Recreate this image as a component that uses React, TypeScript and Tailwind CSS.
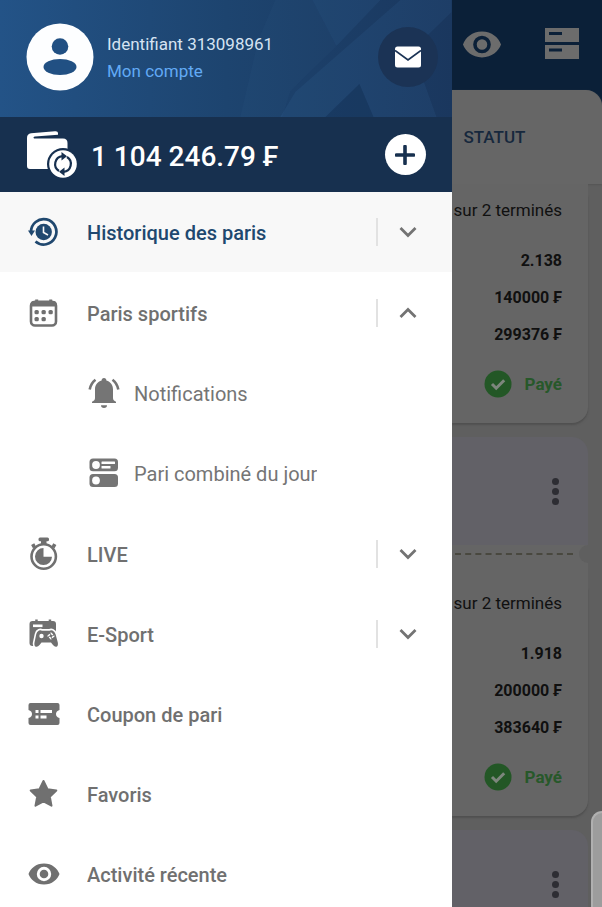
import type { ReactNode } from "react";

type IconProps = { className?: string };

function AvatarIcon() {
  return (
    <svg viewBox="0 0 68 68" className="size-[68px] shrink-0" aria-hidden="true">
      <circle cx="34" cy="34" r="33.5" fill="#fdfeff" />
      <circle cx="34" cy="23.5" r="8.3" fill="#215083" />
      <ellipse cx="34" cy="44" rx="16.5" ry="8" fill="#215083" />
    </svg>
  );
}

function WalletIcon() {
  return (
    <svg viewBox="0 0 52 50" className="h-[50px] w-[52px] shrink-0" aria-hidden="true">
      <path
        d="M1 8c0-3 1.500-4.500 4-4.800L29 1.200c2-.2 3 .6 3 2.300v1.300L9 6.500c-1.500.1-2 1.500-.8 1.900H37c3 0 4.500 1.500 4.500 4.500V36c0 2-1.500 3-3.500 3H4c-2 0-3-1.200-3-3z"
        fill="#fff"
      />
      <circle cx="37" cy="34" r="16" fill="#17304f" />
      <circle cx="37" cy="34" r="13.800" fill="#fff" />
      <g fill="none" stroke="#17304f" strokeWidth="2.200">
        <path d="M33 41A8 8 0 0 1 36.500 26.200" />
        <path d="M41 27A8 8 0 0 1 37.500 41.800" />
      </g>
      <path d="M35.500 22l5.500 4.200-5.500 4.200zM38.500 37.600l-5.500 4.200 5.500 4.200z" fill="#17304f" />
    </svg>
  );
}

function MailIcon() {
  return (
    <svg viewBox="0 0 26 22" className="h-[22px] w-[26px]" aria-hidden="true">
      <rect x="0" y="0.500" width="26" height="21" rx="2.500" fill="#fff" />
      <path d="M0 4.500l13 9.500 13-9.500" fill="none" stroke="#1b3355" strokeWidth="1.800" />
    </svg>
  );
}

function HistoryIcon({ className }: IconProps) {
  return (
    <svg viewBox="0 0 32 32" className={className} aria-hidden="true">
      <path d="M3 16A12.700 12.700 0 1 1 7.500 25.500" fill="none" stroke="currentColor" strokeWidth="2.700" />
      <path d="M0 14.500h7L3.500 20z" fill="currentColor" />
      <circle cx="15.700" cy="16" r="8.200" fill="currentColor" />
      <path d="M15.500 10.500V16.500l4.500 2.500" fill="none" stroke="#f8f8f8" strokeWidth="1.600" />
    </svg>
  );
}

function CalendarIcon({ className }: IconProps) {
  return (
    <svg viewBox="0 0 32 32" className={className} aria-hidden="true">
      <rect x="3" y="4.700" width="25" height="23.800" rx="4" fill="none" stroke="currentColor" strokeWidth="2.600" />
      <path d="M2.500 9.500V7.500q0-3.500 3-3.500h1.700V2.500h3V4h11V2.500h3V4h1.500q3 0 3 3.500v2z" fill="currentColor" />
      <g fill="currentColor">
        <rect x="6.500" y="13" width="4.300" height="4.300" rx="1.500" />
        <rect x="13.500" y="13" width="4.300" height="4.300" rx="1.500" />
        <rect x="20.500" y="13" width="4.300" height="4.300" rx="1.500" />
        <rect x="6.500" y="20" width="4.300" height="4.300" rx="1.500" />
        <rect x="13.500" y="20" width="4.300" height="4.300" rx="1.500" />
      </g>
    </svg>
  );
}

function BellIcon({ className }: IconProps) {
  return (
    <svg viewBox="0 0 32 32" className={className} aria-hidden="true">
      <path
        d="M16 1c1.500 0 2.400 1 2.400 2.500C22.500 4.700 25 8 25 12.500V21c0 1.800 1 2.800 3 3.800V26H4v-1.200c2-1 3-2 3-3.800v-8.500C7 8 9.500 4.700 13.600 3.500 13.600 2 14.500 1 16 1z"
        fill="currentColor"
      />
      <path d="M13 28.300h6a3 2.600 0 0 1-6 0z" fill="currentColor" />
      <path d="M7.500 2.800Q3 6 1.700 12.500M24.500 2.800Q29 6 30.300 12.500" fill="none" stroke="currentColor" strokeWidth="2.600" />
    </svg>
  );
}

function ComboIcon({ className }: IconProps) {
  return (
    <svg viewBox="0 0 32 32" className={className} aria-hidden="true">
      <rect x="1.500" y="1.500" width="28.500" height="12.800" rx="3.500" fill="currentColor" />
      <rect x="1.500" y="17" width="28.500" height="13" rx="3.500" fill="currentColor" />
      <g fill="#fff">
        <circle cx="8" cy="8" r="3.900" />
        <circle cx="8" cy="23.500" r="3.900" />
        <rect x="13.500" y="4.500" width="13.500" height="2.500" rx="0.500" />
        <rect x="13.500" y="9" width="9" height="2.500" rx="0.500" />
      </g>
    </svg>
  );
}

function StopwatchIcon({ className }: IconProps) {
  return (
    <svg viewBox="0 0 32 34" className={className} aria-hidden="true">
      <path d="M12 .5h7.500q1.500 0 1.500 1.500v.8q0 1.500-1.500 1.500h-1V7h-5.500V4.300h-1q-1.500 0-1.500-1.500V2Q10.500.5 12 .5z" fill="currentColor" />
      <path d="M6.500 10.500L4.700 7.200M25 10.500l1.800-3.300" stroke="currentColor" strokeWidth="3.600" />
      <circle cx="15.700" cy="19.500" r="12.200" fill="none" stroke="currentColor" strokeWidth="2.600" />
      <path d="M15.500 11V19.700h8.500A8.500 8.500 0 1 1 15.500 11z" fill="currentColor" />
    </svg>
  );
}

function EsportIcon({ className }: IconProps) {
  return (
    <svg viewBox="0 0 32 32" className={className} aria-hidden="true">
      <path d="M1.500 6q0-3 3-3h2.700V1.500h2.500V3h11V1.500h2.500V3H25q3 0 3 3v11H14L6 28H4.500q-3 0-3-3z" fill="currentColor" />
      <rect x="5" y="6.500" width="9.500" height="2.600" fill="#fff" />
      <path
        d="M11 12.500q1.500-.7 3 .2h7.500q1.500-.9 3-.2 2.200 1 3 3.500l2.300 8.500q.6 3.500-1.300 4.200-1.800.5-3.500-1.700l-2-2.500h-9.500l-2 2.500q-1.700 2.200-3.700 1.700-1.900-.7-1.300-4.200l1.800-8.500q.5-2.500 2.700-3.500z"
        fill="currentColor"
        stroke="#fff"
        strokeWidth="3.200"
        paintOrder="stroke"
      />
      <circle cx="13.500" cy="18" r="2.200" fill="#fff" />
      <path d="M23 15.200l2.800 2.800-2.800 2.800-2.800-2.800z" fill="none" stroke="#fff" strokeWidth="1.500" strokeDasharray="2.600 1.300" />
    </svg>
  );
}

function CouponIcon({ className }: IconProps) {
  return (
    <svg viewBox="0 0 32 32" className={className} aria-hidden="true">
      <path
        d="M2.500 5h27q2 0 2 2v5q-3.500 1-3.500 4t3.500 4v5q0 2-2 2h-27q-2 0-2-2v-5Q4 19 4 16t-3.500-4V7q0-2 2-2z"
        fill="currentColor"
      />
      <g fill="#fff">
        <rect x="7.500" y="12" width="3" height="3" />
        <rect x="12.500" y="12" width="11.500" height="3" />
        <rect x="7.500" y="17.500" width="3" height="3" />
        <rect x="12.500" y="17.500" width="6" height="3" />
      </g>
    </svg>
  );
}

function StarIcon({ className }: IconProps) {
  return (
    <svg viewBox="0 0 32 32" className={className} aria-hidden="true">
      <path
        d="M15.500 3l4 8.300 8.800 1.200-6.500 6.200 1.700 9-8-4.400-8 4.400 1.700-9-6.500-6.200 8.800-1.200z"
        fill="currentColor"
        stroke="currentColor"
        strokeWidth="2"
        strokeLinejoin="round"
      />
    </svg>
  );
}

function EyeIcon({ className }: IconProps) {
  return (
    <svg viewBox="0 0 32 22" className={className} aria-hidden="true">
      <path
        fillRule="evenodd"
        d="M16 0.500C24 .5 29.500 5.500 31.500 11 29.500 16.500 24 21.500 16 21.500S2.500 16.500.5 11C2.500 5.500 8 .5 16 .5zM16 3.800a7.200 7.200 0 1 0 0 14.400 7.200 7.200 0 0 0 0-14.400zM16 6.700a4.300 4.300 0 1 1 0 8.600 4.300 4.300 0 0 1 0-8.600z"
        fill="currentColor"
      />
    </svg>
  );
}

function Chevron({ open }: { open?: boolean }) {
  return (
    <svg viewBox="0 0 18 12" className="h-3 w-[18px]" aria-hidden="true">
      <path d={open ? "M1.500 10L9 2.500l7.500 7.500" : "M1.500 2L9 9.500 16.500 2"} fill="none" stroke="#737373" strokeWidth="2.800" />
    </svg>
  );
}

type RowProps = { icon: ReactNode; label: string; active?: boolean; toggle?: "open" | "closed" };

function MenuRow({ icon, label, active, toggle }: RowProps) {
  return (
    <div className={active ? "flex h-20 items-center bg-[#f8f8f8] text-[#20486f]" : "flex h-20 items-center text-[#707070]"}>
      <a href="#" className="flex min-w-0 flex-1 items-center gap-[27px] pl-7 text-xl font-medium">
        {icon}
        <span className="truncate pt-0.5">{label}</span>
      </a>
      {toggle && (
        <button
          type="button"
          aria-label={label}
          aria-expanded={toggle === "open"}
          className="mr-3.5 flex h-7 w-[62px] items-center justify-center border-l-2 border-[#e2e2e2]"
        >
          <Chevron open={toggle === "open"} />
        </button>
      )}
    </div>
  );
}

function SubRow({ icon, label }: RowProps) {
  return (
    <a href="#" className="flex h-20 items-center gap-3.5 pl-[88px] text-xl text-[#757575]">
      {icon}
      <span className="truncate pt-0.5">{label}</span>
    </a>
  );
}

function HeaderPattern() {
  return (
    <svg viewBox="0 0 451 117" preserveAspectRatio="none" className="absolute inset-0 size-full" aria-hidden="true">
      <g fill="#5b9bd6">
        <path d="M240 117L258 40 275 0h37l24 46-46 45-8 26z" opacity="0.040" />
        <path d="M295 92L400 0h51v12L412 50l24 67h-63l-14-33-34 33h-45z" opacity="0.080" />
        <path d="M312 0h68l-44 46z" opacity="0.080" />
      </g>
      <path d="M325 117l34-33 14 33z" fill="#0d2c52" opacity="0.200" />
    </svg>
  );
}

function Drawer() {
  return (
    <aside className="flex w-3/4 shrink-0 flex-col bg-white">
      <header className="relative h-[117px] shrink-0 bg-linear-to-r from-[#235387] via-[#1d446f] to-[#1a375e]">
        <HeaderPattern />
        <div className="relative flex items-center pt-[23px] pr-3.5 pl-[26px]">
          <AvatarIcon />
          <div className="ml-[13px] flex-1 pt-0.5 leading-[27px]">
            <p className="text-[17px] text-[#d5e3f2]">Identifiant 313098961</p>
            <a href="#" className="text-[17px] text-[#62aaf5]">Mon compte</a>
          </div>
          <button type="button" aria-label="Messages" className="flex size-[60px] items-center justify-center rounded-full bg-[#1b3355]">
            <MailIcon />
          </button>
        </div>
      </header>
      <div className="flex h-[75px] shrink-0 items-center bg-[#17304f] pr-[26px] pl-[26px] text-white">
        <WalletIcon />
        <p className="ml-[13px] flex-1 pt-1 text-[28px] font-medium">1 104 246.79 ₣</p>
        <button type="button" aria-label="Ajouter" className="flex size-[41px] items-center justify-center rounded-full bg-white">
          <svg viewBox="0 0 20 20" className="size-5" aria-hidden="true">
            <path d="M10 1.500v17M1.500 10h17" stroke="#17304f" strokeWidth="3.600" strokeLinecap="round" />
          </svg>
        </button>
      </div>
      <nav>
        <MenuRow active toggle="closed" label="Historique des paris" icon={<HistoryIcon className="size-8 shrink-0" />} />
        <div className="py-px">
          <MenuRow toggle="open" label="Paris sportifs" icon={<CalendarIcon className="size-8 shrink-0" />} />
          <SubRow label="Notifications" icon={<BellIcon className="size-8 shrink-0" />} />
          <SubRow label="Pari combiné du jour" icon={<ComboIcon className="size-8 shrink-0" />} />
        </div>
        <MenuRow toggle="closed" label="LIVE" icon={<StopwatchIcon className="h-[34px] w-8 shrink-0" />} />
        <MenuRow toggle="closed" label="E-Sport" icon={<EsportIcon className="size-8 shrink-0" />} />
        <MenuRow label="Coupon de pari" icon={<CouponIcon className="size-8 shrink-0" />} />
        <MenuRow label="Favoris" icon={<StarIcon className="size-8 shrink-0" />} />
        <MenuRow label="Activité récente" icon={<EyeIcon className="h-[22px] w-8 shrink-0" />} />
      </nav>
    </aside>
  );
}

function BetDetails({ odds, stake, win }: { odds: string; stake: string; win: string }) {
  return (
    <div className="rounded-br-2xl bg-[#656565] pr-[26px] pb-[25px] text-right text-[#101010] shadow-[0_2px_2px_#505050]">
      <p className="pb-[17px] text-[17px] leading-[30px] whitespace-nowrap">sur 2 terminés</p>
      <dl className="text-base leading-[37px] font-bold">
        <dd>{odds}</dd>
        <dd>{stake}</dd>
        <dd>{win}</dd>
      </dl>
      <div className="flex items-center justify-end gap-[13px] pt-[17px]">
        <svg viewBox="0 0 28 28" className="size-7" aria-hidden="true">
          <circle cx="14" cy="14" r="13.500" fill="#235726" />
          <path d="M8 14l4.200 4.200 8-8" fill="none" stroke="#7d867d" strokeWidth="3" />
        </svg>
        <span className="text-[17px] leading-7 font-bold text-[#27582a]">Payé</span>
      </div>
    </div>
  );
}

function BetHeader() {
  return (
    <div className="flex h-[108px] items-center justify-end rounded-tr-2xl bg-[#626167] pr-[26px]">
      <button type="button" aria-label="Options" className="flex w-3.5 flex-col items-center gap-[3px]">
        <span className="size-[7px] rounded-full bg-[#2d2d33]" />
        <span className="size-[7px] rounded-full bg-[#2d2d33]" />
        <span className="size-[7px] rounded-full bg-[#2d2d33]" />
      </button>
    </div>
  );
}

function HistoryPage() {
  return (
    <main className="relative flex min-w-0 flex-1 flex-col overflow-hidden bg-[#5f5f5f]">
      <div className="shrink-0 bg-[#0b2038]">
        <div className="flex h-[88px] items-center justify-between pr-[23px] pl-2.5">
          <button type="button" aria-label="Afficher" className="text-[#6c6c6c]">
            <EyeIcon className="h-[27px] w-10" />
          </button>
          <button type="button" aria-label="Affichage">
            <svg viewBox="0 0 34 32" className="h-8 w-[34px]" aria-hidden="true">
              <path d="M0 0h34v14H0zM0 17h34v14H0z" fill="#6c6c6c" />
              <path d="M4 4h13v3H4zM4 20.500h13v3H4z" fill="#0b2038" />
            </svg>
          </button>
        </div>
        <div className="mt-0.5 flex h-[94px] items-center rounded-tr-2xl bg-[#666666] pt-0.5 pl-3 shadow-[0_1px_2px_#555555]">
          <h1 className="text-[17px] font-medium text-[#16283d]">STATUT</h1>
        </div>
      </div>
      <div className="flex flex-col gap-3.5 pr-3.5">
        <div className="rounded-br-2xl bg-[#656565] pt-[11px]">
          <BetDetails odds="2.138" stake="140000 ₣" win="299376 ₣" />
        </div>
        <div>
          <BetHeader />
          <div className="flex h-[18px] items-center bg-[#656565]">
            <div className="ml-[3px] flex-1 border-t-2 border-dashed border-[#49483f]" />
            <div className="ml-1.5 h-[18px] w-[9px] rounded-l-full bg-[#5f5f5f]" />
          </div>
          <div className="rounded-br-2xl bg-[#656565] pt-[25px]">
            <BetDetails odds="1.918" stake="200000 ₣" win="383640 ₣" />
          </div>
        </div>
        <BetHeader />
      </div>
      <div className="absolute right-0 bottom-0 h-24 w-[11px] rounded-tl-xl border-t-2 border-l-2 border-[#b0b0b0] bg-[#9d9d9d]" />
    </main>
  );
}

export default function App() {
  return (
    <div className="flex h-screen overflow-hidden font-[Roboto,sans-serif]">
      <Drawer />
      <HistoryPage />
    </div>
  );
}
